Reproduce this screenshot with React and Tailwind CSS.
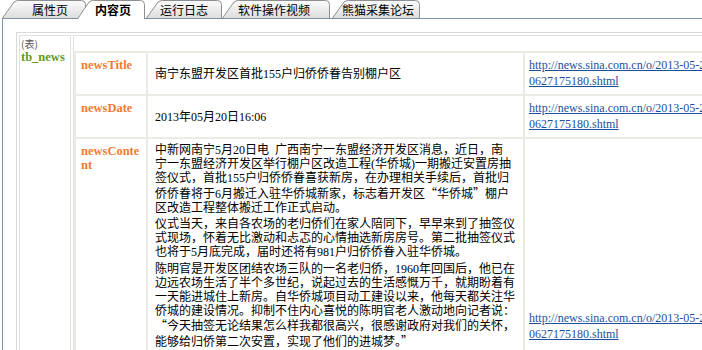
import React from 'react';

const tabs = [
  { label: '属性页', w: 84, ml: 0, pl: 30 },
  { label: '内容页', w: 68, ml: -9, pl: 18, active: true },
  { label: '运行日志', w: 76, ml: 1, pl: 14 },
  { label: '软件操作视频', w: 108, ml: 0, pl: 16 },
  { label: '熊猫采集论坛', w: 88, ml: 2, pl: 10 },
];

const paragraphs = [
  [
    '中新网南宁5月20日电\u00a0\u00a0广西南宁一东盟经济开发区消息，近日，南',
    '宁一东盟经济开发区举行棚户区改造工程(华侨城)一期搬迁安置房抽',
    '签仪式，首批155户归侨侨眷喜获新房，在办理相关手续后，首批归',
    '侨侨眷将于6月搬迁入驻华侨城新家，标志着开发区“华侨城”棚户',
    '区改造工程整体搬迁工作正式启动。',
  ],
  [
    '仪式当天，来自各农场的老归侨们在家人陪同下，早早来到了抽签仪',
    '式现场，怀着无比激动和忐忑的心情抽选新房房号。第二批抽签仪式',
    '也将于5月底完成，届时还将有981户归侨侨眷入驻华侨城。',
  ],
  [
    '陈明官是开发区团结农场三队的一名老归侨，1960年回国后，他已在',
    '边远农场生活了半个多世纪，说起过去的生活感慨万千，就期盼着有',
    '一天能进城住上新房。自华侨城项目动工建设以来，他每天都关注华',
    '侨城的建设情况。抑制不住内心喜悦的陈明官老人激动地向记者说：',
    '“今天抽签无论结果怎么样我都很高兴，很感谢政府对我们的关怀，',
    '能够给归侨第二次安置，实现了他们的进城梦。”',
  ],
];

const url = 'http://news.sina.com.cn/o/2013-05-20/160627175180.shtml';

// curly quotes should come out full width, like the rest of the CJK text
const renderLine = (line) =>
  line.split(/([“”])/).map((part, i) =>
    part === '“' || part === '”' ? (
      <span key={i} className="font-['Noto_Sans_CJK_SC',sans-serif]">{part}</span>
    ) : (
      part
    )
  );

const Tab = ({ label, w, ml, pl, active, idx }) => {
  const h = active ? 19 : 18;
  const s = 14;
  const d = `M0.5 ${h} L${s - 2} 2 Q${s} 0.5 ${s + 2.5} 0.5 L${w - 4.5} 0.5 Q${w - 0.5} 0.5 ${w - 0.5} 4.5 L${w - 0.5} ${h}`;
  return (
    <div
      className={`relative shrink-0 ${active ? 'z-10 h-[19px] -mb-px' : 'h-[18px]'}`}
      style={{ width: w, marginLeft: ml }}
    >
      <svg className="absolute inset-0" width={w} height={h}>
        <defs>
          <linearGradient id={`tabfill${idx}`} x1="0" y1="0" x2="0" y2="1">
            <stop offset="0" stopColor="#fbfbfb" />
            <stop offset="1" stopColor="#dedede" />
          </linearGradient>
        </defs>
        <path d={d} fill={active ? '#ffffff' : `url(#tabfill${idx})`} stroke="#8d8f92" strokeWidth="1" />
      </svg>
      <span
        className={`relative block h-[18px] pt-[1px] text-[12px] leading-[17px] text-black whitespace-nowrap ${active ? 'font-bold' : ''}`}
        style={{ paddingLeft: pl }}
      >
        {label}
      </span>
    </div>
  );
};

const FieldRow = ({ name, children, rowClass = '', valueClass = 'align-middle' }) => (
  <tr>
    <td className={`w-[70px] bg-white px-[5px] pt-[5px] align-top ${rowClass}`}>
      <div className="w-[60px] break-all text-[12.5px] font-bold leading-[14px] text-[#f37b2f]">
        {name}
      </div>
    </td>
    <td className={`w-[375px] bg-white pl-[7px] pr-[5px] text-[12px] text-black ${valueClass}`}>
      {children}
    </td>
    <td className="bg-white px-[4px] py-[4px] align-middle">
      <a href="#" className="block w-[199px] break-all text-[12px] leading-[15.5px] text-[#1d4f9e] underline">
        {url}
      </a>
    </td>
  </tr>
);

export default function App() {
  return (
    <div className="h-[350px] w-[702px] overflow-hidden bg-white font-['Liberation_Serif','Noto_Sans_CJK_SC',serif]">
      {/* tab strip */}
      <div className="flex h-[18px] items-end pl-[2px] font-['Noto_Sans_CJK_SC',sans-serif]">
        {tabs.map((t, i) => (
          <Tab key={t.label} idx={i} {...t} />
        ))}
      </div>

      {/* panel */}
      <div className="ml-[2px] w-[760px] border-l border-t border-[#7f93a8] pl-[13px] pt-[13px]">
        <table className="border-separate border-spacing-[2px] border border-[#d9d9d9]">
          <tbody>
            <tr>
              <td className="w-[52px] border border-[#e2e2e2] px-[1px] pt-[2px] align-top">
                <div className="text-[10px] leading-[12px] text-[#555] font-['Noto_Sans_CJK_SC',sans-serif]">(表)</div>
                <div className="text-[12.5px] font-bold leading-[14px] text-[#5f9a20]">tb_news</div>
              </td>
              <td className="border border-[#e2e2e2] p-0 pt-[15px] align-top">
                <table className="border-separate border-spacing-[2px] bg-[#ebece5]">
                  <tbody>
                    <FieldRow name="newsTitle" rowClass="h-[41px]">
                      南宁东盟开发区首批155户归侨侨眷告别棚户区
                    </FieldRow>
                    <FieldRow name="newsDate" rowClass="h-[41px]">
                      2013年05月20日16:06
                    </FieldRow>
                    <FieldRow name="newsContent" rowClass="h-[375px]" valueClass="align-top pt-[4px]">
                      {paragraphs.map((p, pi) => (
                        <div key={pi} className={pi > 0 ? 'mt-[2px]' : ''}>
                          {p.map((line, li) => (
                            <div key={li} className="whitespace-nowrap leading-[14.2px]">
                              {renderLine(line)}
                            </div>
                          ))}
                        </div>
                      ))}
                    </FieldRow>
                  </tbody>
                </table>
              </td>
            </tr>
          </tbody>
        </table>
      </div>
    </div>
  );
}
